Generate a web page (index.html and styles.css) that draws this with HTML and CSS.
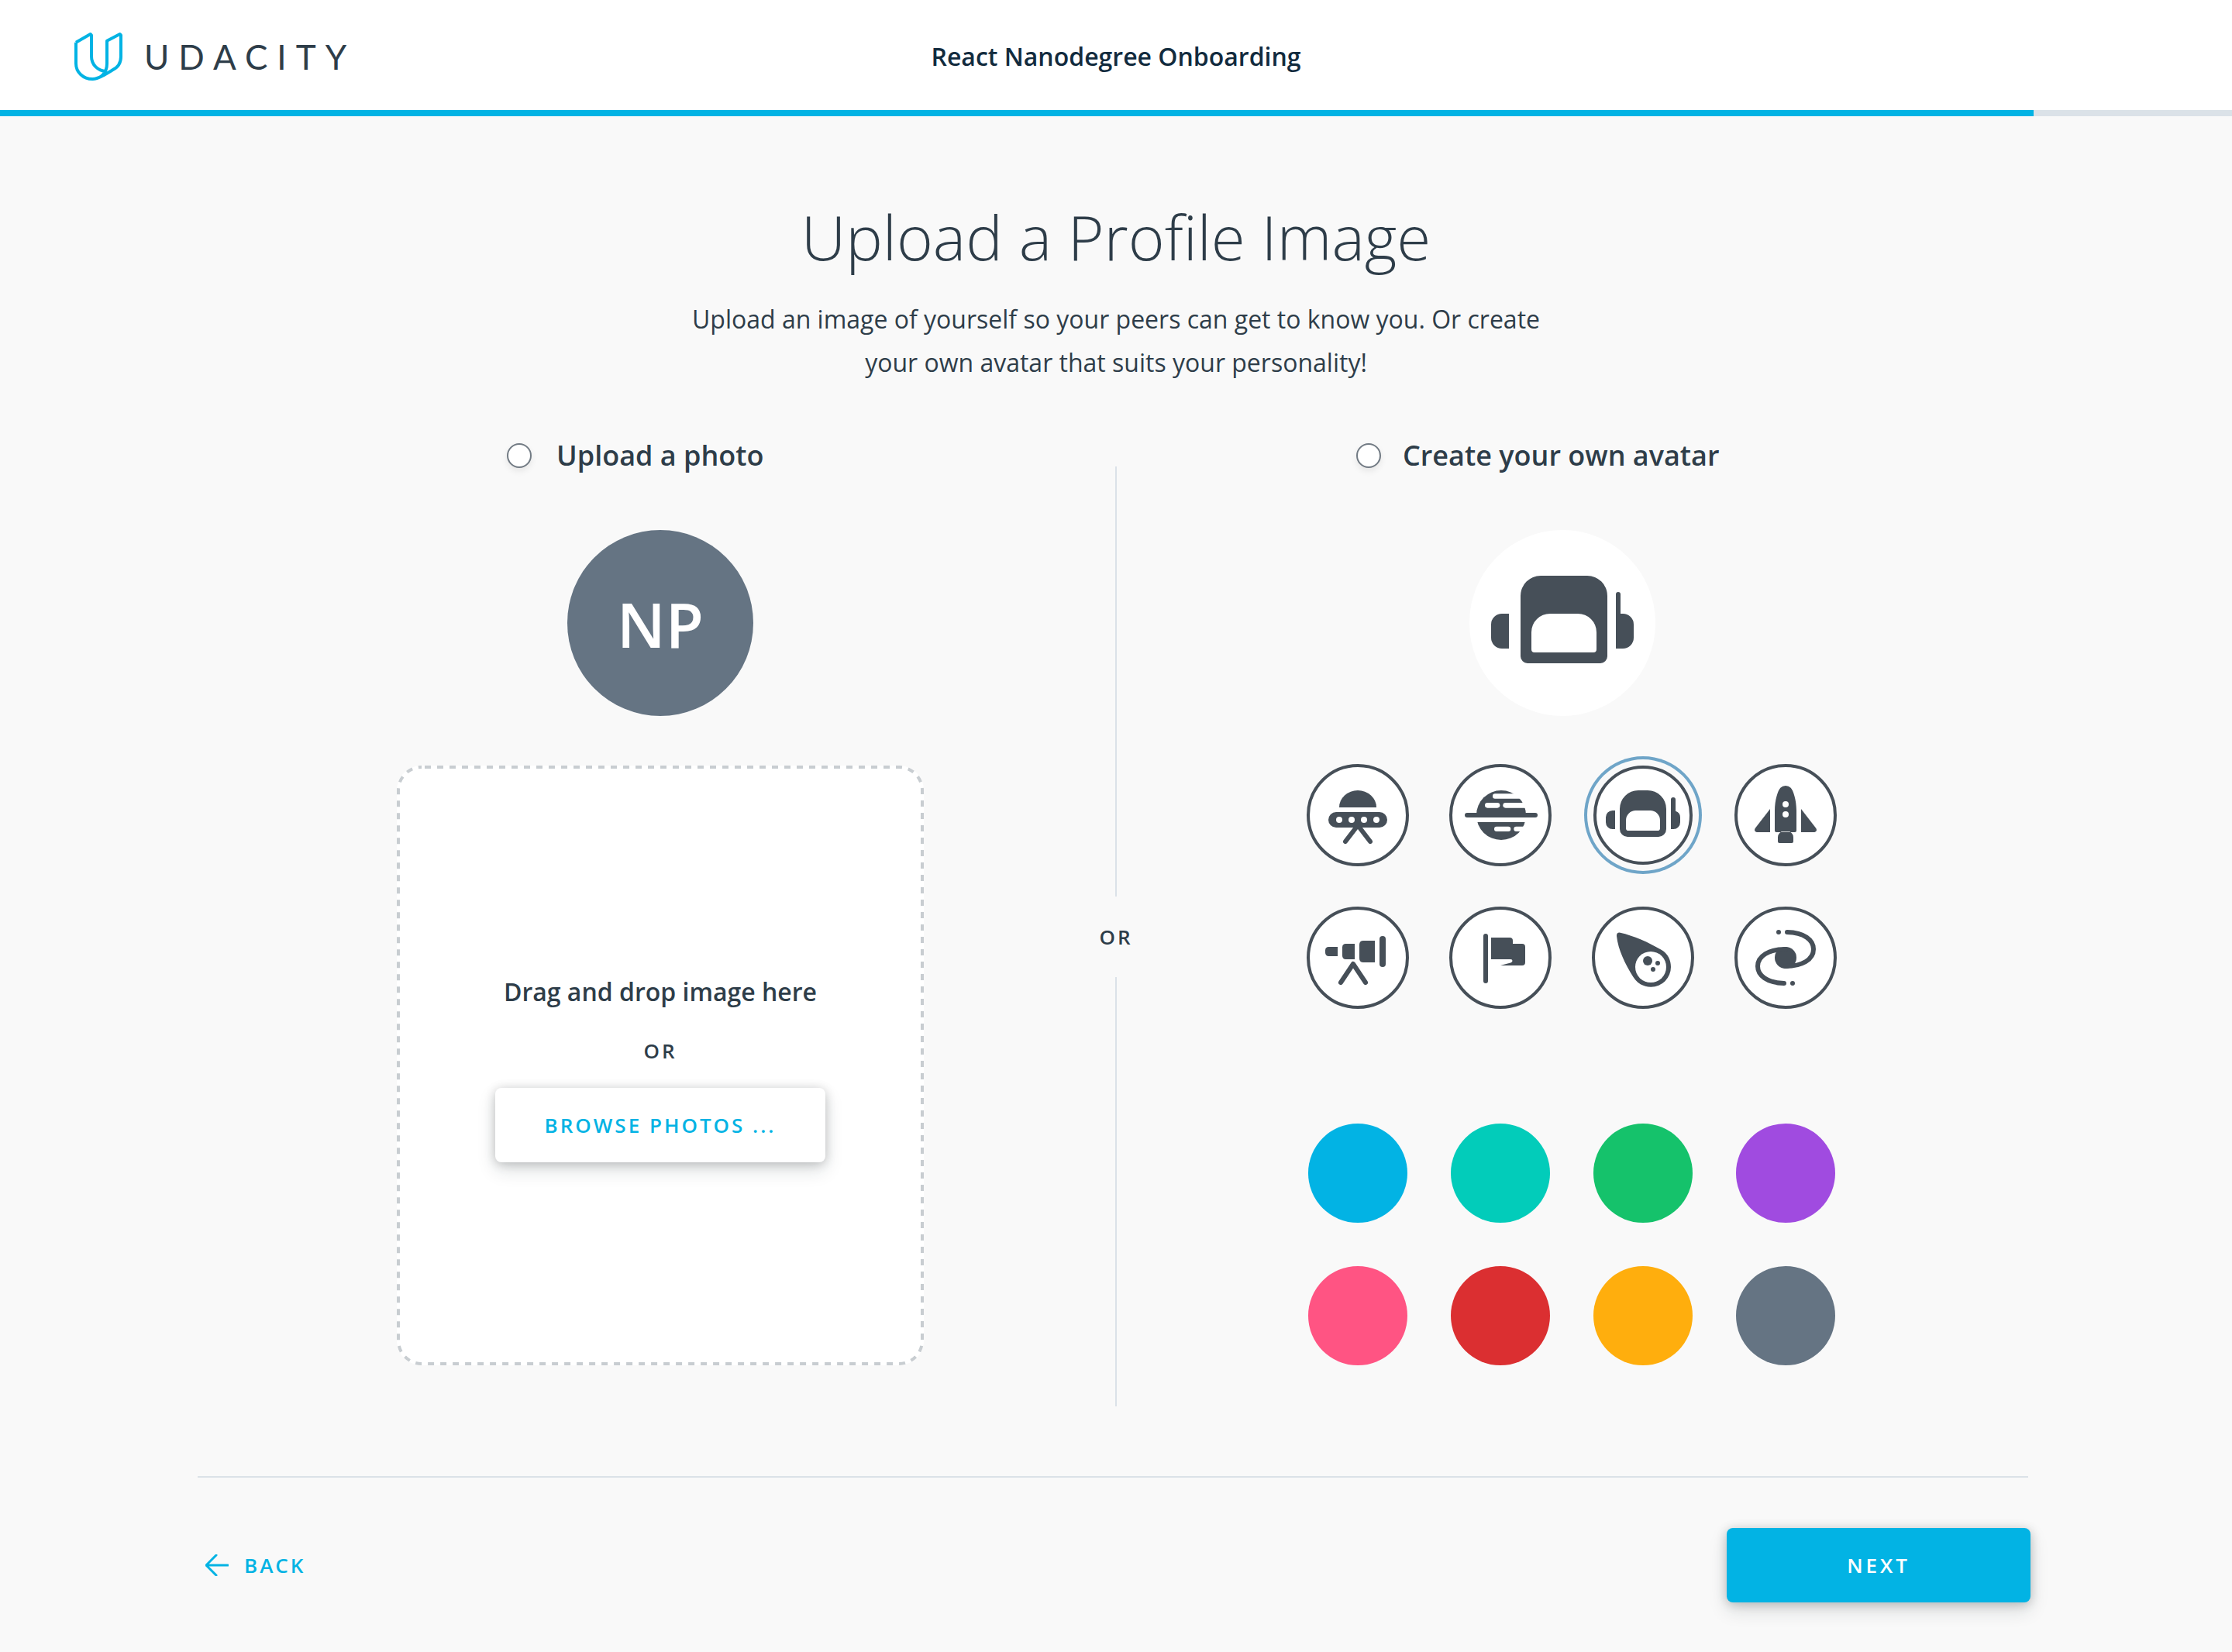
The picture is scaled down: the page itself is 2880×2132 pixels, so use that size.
FILE: index.html
```html
<!DOCTYPE html>
<html lang="en">
<head>
<meta charset="utf-8">
<meta name="viewport" content="width=device-width, initial-scale=1">
<title>React Nanodegree Onboarding</title>
<link rel="stylesheet" href="styles.css">
</head>
<body>
<header class="topbar">
  <a class="brand" href="#">
    <svg class="brand-mark" viewBox="108 66 186 186" aria-hidden="true">
      <path d="M114 104 170 72 174 76V158C174 192 200 214 230 216M114 104V186C114 220 142 246 178 246C196 246 206 240 222 231L254 212C276 202 288 184 288 160V76L284 72 234 98V186C234 220 212 246 178 246"/>
    </svg>
    <span class="brand-name">UDACITY</span>
  </a>
  <p class="topbar-title">React Nanodegree Onboarding</p>
</header>
<div class="progress" role="progressbar" aria-label="Onboarding progress" aria-valuenow="91" aria-valuemin="0" aria-valuemax="100"><div class="progress-fill" style="width:91.1%"></div></div>

<main class="page">
  <h1 class="title">Upload a Profile Image</h1>
  <p class="intro">Upload an image of yourself so your peers can get to know you. Or create your own avatar that suits your personality!</p>

  <div class="columns">
    <section class="column">
      <label class="option option-upload"><input class="option-radio" type="radio" name="source">Upload a photo</label>
      <div class="preview preview-initials">NP</div>
      <div class="drop">
        <svg class="drop-outline" aria-hidden="true"><rect class="drop-dash" x="2" y="2" rx="30"/></svg>
        <p class="drop-text">Drag and drop image here</p>
        <p class="or">OR</p>
        <button class="button button-light" type="button">BROWSE PHOTOS ...</button>
      </div>
    </section>

    <div class="divider"><span class="divider-line"></span><span class="or">OR</span><span class="divider-line"></span></div>

    <section class="column">
      <label class="option option-avatar"><input class="option-radio" type="radio" name="source">Create your own avatar</label>
      <div class="preview-row">
        <div class="preview preview-avatar">
          <svg class="preview-icon" viewBox="0 0 240 240" aria-hidden="true">
            <path class="ink" fill-rule="evenodd" d="M92 59H152A26 26 0 0 1 178 85V163A9 9 0 0 1 169 172H75A9 9 0 0 1 66 163V85A26 26 0 0 1 92 59ZM104 108A24 24 0 0 0 80 132V154Q80 158 84 158H160Q164 158 164 154V132A24 24 0 0 0 140 108Z"/>
            <path class="ink" d="M51 108V153H42A14 14 0 0 1 28 139V122A14 14 0 0 1 42 108ZM189 153V83A3 3 0 0 1 195 83V108H198A14 14 0 0 1 212 122V139A14 14 0 0 1 198 153Z"/>
          </svg>
        </div>
      </div>

      <div class="choices choices-avatar" role="radiogroup" aria-label="Avatar">
        <label class="avatar"><input class="avatar-input" type="radio" name="avatar" aria-label="UFO">
          <svg class="avatar-icon" viewBox="0 0 396 396" aria-hidden="true">
            <path class="ink" d="M126 168A72 66 0 0 1 270 168Z"/><rect class="ink" x="84" y="186" width="228" height="60" rx="30"/>
            <path class="line" d="M196 240 150 300M200 240 246 300"/>
            <g class="paper"><circle cx="126" cy="216" r="12"/><circle cx="174" cy="216" r="12"/><circle cx="222" cy="216" r="12"/><circle cx="270" cy="216" r="12"/></g>
          </svg></label>
        <label class="avatar"><input class="avatar-input" type="radio" name="avatar" aria-label="Planet">
          <svg class="avatar-icon" viewBox="0 0 396 396" aria-hidden="true">
            <circle class="ink" cx="201" cy="198" r="96"/>
            <g class="paper"><rect x="96" y="207" width="210" height="18"/><rect x="168" y="115" width="130" height="19" rx="9"/><rect x="138" y="150" width="58" height="20" rx="10"/><rect x="208" y="150" width="100" height="20" rx="10"/><rect x="174" y="242" width="64" height="19" rx="9"/><rect x="250" y="242" width="60" height="19" rx="9"/></g>
            <rect class="ink" x="60" y="189" width="282" height="18" rx="9"/>
          </svg></label>
        <label class="avatar"><input class="avatar-input" type="radio" name="avatar" aria-label="Astronaut" checked>
          <svg class="avatar-icon" viewBox="0 0 396 396" aria-hidden="true">
            <path class="ink" fill-rule="evenodd" d="M180 102H216A72 72 0 0 1 288 174V252A30 30 0 0 1 258 282H138A30 30 0 0 1 108 252V174A72 72 0 0 1 180 102ZM170 180A38 38 0 0 0 132 218V248Q132 258 142 258H254Q264 258 264 248V218A38 38 0 0 0 226 180Z"/>
            <path class="ink" d="M90 180V252H80A26 26 0 0 1 54 226V206A26 26 0 0 1 80 180ZM306 252V138A9 9 0 0 1 324 138V182Q342 188 342 206V226A26 26 0 0 1 316 252Z"/>
          </svg></label>
        <label class="avatar"><input class="avatar-input" type="radio" name="avatar" aria-label="Rocket">
          <svg class="avatar-icon" viewBox="0 0 396 396" aria-hidden="true">
            <path class="ink" d="M156 258V180C156 140 168 102 178 92Q186 84 198 84Q210 84 218 92C228 102 240 140 240 180V258Q240 264 234 264H162Q156 264 156 258ZM138 174V264H86Q74 260 80 249ZM258 174V264H310Q322 260 316 249ZM182 262Q168 270 168 284V300Q168 306 174 306H222Q228 306 228 300V284Q228 270 214 262Z"/>
            <g class="paper"><circle cx="198" cy="156" r="12"/><circle cx="198" cy="195" r="12"/></g>
          </svg></label>
        <label class="avatar"><input class="avatar-input" type="radio" name="avatar" aria-label="Telescope">
          <svg class="avatar-icon" viewBox="0 0 396 396" aria-hidden="true">
            <path class="ink" d="M120 156V192H86Q72 192 72 178V170Q72 156 86 156ZM186 144V204H152Q138 204 138 190V158Q138 144 152 144ZM264 132V216H220Q204 216 204 200V148Q204 132 220 132Z"/>
            <rect class="ink" x="282" y="114" width="24" height="120" rx="12"/><path class="line" d="M132 294 180 222 228 294"/>
          </svg></label>
        <label class="avatar"><input class="avatar-input" type="radio" name="avatar" aria-label="Flag">
          <svg class="avatar-icon" viewBox="0 0 396 396" aria-hidden="true">
            <rect class="ink" x="132" y="105" width="18" height="192" rx="9"/>
            <path class="ink" d="M162 120H234Q246 120 246 132V144H282Q294 144 294 156V216Q294 228 282 228H198L240 217Q246 213 244 208Q243 204 236 204H162Z"/>
          </svg></label>
        <label class="avatar"><input class="avatar-input" type="radio" name="avatar" aria-label="Comet">
          <svg class="avatar-icon" viewBox="0 0 396 396" aria-hidden="true">
            <path class="ink" d="M96 114Q95 99 110 101C160 112 220 138 270 168C296 184 306 208 306 234A77 77 0 0 1 229 311C200 311 176 298 160 272C128 220 102 168 96 114Z"/>
            <circle class="paper" cx="228" cy="234" r="60"/><g class="ink"><circle cx="216" cy="210" r="18"/><circle cx="255" cy="219" r="9"/><circle cx="237" cy="243" r="9"/></g>
          </svg></label>
        <label class="avatar"><input class="avatar-input" type="radio" name="avatar" aria-label="Galaxy">
          <svg class="avatar-icon" viewBox="0 0 396 396" aria-hidden="true">
            <g class="ink"><circle cx="198" cy="198" r="42"/><circle cx="171" cy="99" r="9"/><circle cx="225" cy="297" r="9"/></g>
            <path class="line" d="M204 99C270 100 306 130 306 165C306 205 262 231 198 231M192 297C126 296 90 266 90 231C90 191 134 165 198 165"/>
          </svg></label>
      </div>

      <div class="choices choices-color" role="radiogroup" aria-label="Colour">
        <input class="swatch swatch-blue" type="radio" name="color" aria-label="Blue">
        <input class="swatch swatch-teal" type="radio" name="color" aria-label="Teal">
        <input class="swatch swatch-green" type="radio" name="color" aria-label="Green">
        <input class="swatch swatch-purple" type="radio" name="color" aria-label="Purple">
        <input class="swatch swatch-pink" type="radio" name="color" aria-label="Pink">
        <input class="swatch swatch-red" type="radio" name="color" aria-label="Red">
        <input class="swatch swatch-orange" type="radio" name="color" aria-label="Orange">
        <input class="swatch swatch-slate" type="radio" name="color" aria-label="Slate">
      </div>
    </section>
  </div>

  <footer class="actions">
    <hr class="rule">
    <div class="actions-row">
      <a class="back" href="#"><svg class="back-arrow" viewBox="0 0 30 28" aria-hidden="true"><path d="M14 1 1 14 14 27M1 14H29"/></svg>BACK</a>
      <button class="button button-primary" type="button">NEXT</button>
    </div>
  </footer>
</main>
</body>
</html>
```
FILE: styles.css
```css
* { box-sizing: border-box; }

body {
  margin: 0;
  background: #f9f9f9;
  color: #2e3d49;
  font-family: "Open Sans", sans-serif;
}

h1, p { margin: 0; }

a { text-decoration: none; }

/* Header */
.topbar {
  display: grid;
  grid-template-columns: 1fr auto 1fr;
  align-items: center;
  height: 142px;
  padding: 4px 96px 0;
  background: #fff;
}

.brand {
  display: flex;
  align-items: center;
  gap: 28px;
  color: #2e3d49;
}

.brand-mark {
  width: 62px;
  height: 62px;
  fill: none;
  stroke: #02b3e4;
  stroke-width: 12;
  stroke-linejoin: round;
  overflow: visible;
}

.brand-name {
  font: 400 44px/60px Lato, sans-serif;
  letter-spacing: 12px;
}

.topbar-title {
  color: #122b3e;
  font-size: 32px;
  font-weight: 600;
  line-height: 44px;
}

.progress {
  height: 8px;
  background: #dbe2e8;
}

.progress-fill {
  height: 100%;
  background: #02b3e4;
}

/* Intro */
.page { padding: 100px 0 64px; }

.title {
  font-size: 80px;
  font-weight: 300;
  line-height: 110px;
  text-align: center;
}

.intro {
  max-width: 1160px;
  margin: 24px auto 68px;
  font-size: 32px;
  line-height: 56px;
  text-align: center;
}

/* Two ways to set the image */
.columns {
  display: flex;
  justify-content: center;
  gap: 204px;
}

.column {
  width: 684px;
  padding-bottom: 51px;
}

.option {
  display: flex;
  align-items: center;
  margin-bottom: 72px;
  font-size: 36px;
  font-weight: 600;
  line-height: 48px;
}

.option-upload {
  gap: 32px;
  padding-left: 144px;
}

.option-avatar {
  gap: 28px;
  padding-left: 64px;
}

.option-radio {
  appearance: none;
  width: 32px;
  height: 32px;
  margin: 0;
  border: 2px solid #727b84;
  border-radius: 50%;
  background: #fff;
  box-shadow: 0 4px 8px rgba(0, 0, 0, .08);
}

.preview {
  width: 240px;
  height: 240px;
  margin: 0 auto 64px;
  border-radius: 50%;
}

.preview-initials {
  display: grid;
  place-items: center;
  background: #657483;
  color: #fff;
  font-size: 80px;
  font-weight: 600;
}

.preview-row { padding-right: 24px; }

.preview-avatar {
  margin-bottom: 62px;
  background: #fff;
}

.preview-icon {
  display: block;
  width: 100%;
}

.ink { fill: #464f58; }

.paper { fill: #fff; }

.line {
  fill: none;
  stroke: #464f58;
  stroke-width: 18;
  stroke-linecap: round;
  stroke-linejoin: round;
}

.drop {
  position: relative;
  display: flex;
  flex-direction: column;
  align-items: center;
  width: 680px;
  margin: 0 auto;
  padding: 270px 32px 262px;
  border-radius: 32px;
  background: #fff;
}

.drop-outline {
  position: absolute;
  inset: 0;
  width: 100%;
  height: 100%;
}

.drop-dash {
  width: calc(100% - 4px);
  height: calc(100% - 4px);
  fill: none;
  stroke: #c8cdd1;
  stroke-width: 4;
  stroke-dasharray: 8 8;
  stroke-dashoffset: -4;
}

.drop-text {
  font-size: 32px;
  font-weight: 600;
  line-height: 44px;
}

.or {
  font-size: 26px;
  font-weight: 600;
  line-height: 36px;
  letter-spacing: 3px;
}

.drop .or { margin: 36px 0 30px; }

.button {
  position: relative;
  height: 96px;
  border: 0;
  border-radius: 8px;
  font: 600 26px/36px "Open Sans", sans-serif;
  letter-spacing: 3px;
  box-shadow: 0 2px 14px rgba(0, 0, 0, .2), 0 10px 24px rgba(20, 40, 50, .14);
}

.button-light {
  width: 426px;
  background: #fff;
  color: #02b3e4;
}

.button-primary {
  width: 392px;
  background: #02b3e4;
  color: #fff;
  letter-spacing: 4px;
}

.divider {
  display: flex;
  flex-direction: column;
  align-items: center;
  width: 84px;
  padding-top: 38px;
}

.divider-line {
  flex: 1;
  width: 2px;
  background: #dbe2e8;
}

.divider .or { padding: 34px 0; }

/* Avatar and colour pickers */
.choices {
  display: grid;
  grid-template-columns: repeat(4, 132px);
  grid-auto-rows: 132px;
  gap: 52px;
  place-items: center;
}

.choices-avatar { margin-bottom: 146px; }

.avatar {
  display: grid;
  place-items: center;
}

.avatar-input,
.avatar-icon {
  grid-area: 1 / 1;
  width: 132px;
  height: 132px;
}

.avatar-input {
  appearance: none;
  margin: 0;
  border: 4px solid #464f58;
  border-radius: 50%;
  background: #fff;
}

.avatar-input:checked {
  width: 128px;
  height: 128px;
  box-shadow: 0 0 0 8px #f9f9f9, 0 0 0 12px #6fa5c8;
}

.swatch {
  appearance: none;
  width: 128px;
  height: 128px;
  margin: 0;
  border-radius: 50%;
}

.swatch-blue { background: #02b3e4; }
.swatch-teal { background: #02ccba; }
.swatch-green { background: #15c26b; }
.swatch-purple { background: #a04be0; }
.swatch-pink { background: #ff5483; }
.swatch-red { background: #db2f31; }
.swatch-orange { background: #ffae0d; }
.swatch-slate { background: #657483; }

/* Footer */
.actions { padding: 90px 260px 0 255px; }

.rule {
  height: 2px;
  margin: 0 3px 65px 0;
  border: 0;
  background: #dbe2e8;
}

.actions-row {
  display: flex;
  align-items: center;
  justify-content: space-between;
  padding-left: 10px;
}

.back {
  display: flex;
  align-items: center;
  gap: 20px;
  color: #02b3e4;
  font-size: 26px;
  font-weight: 600;
  line-height: 36px;
  letter-spacing: 3px;
}

.back-arrow {
  width: 30px;
  height: 28px;
  fill: none;
  stroke: #02b3e4;
  stroke-width: 3;
  stroke-linecap: round;
  stroke-linejoin: round;
}
```
